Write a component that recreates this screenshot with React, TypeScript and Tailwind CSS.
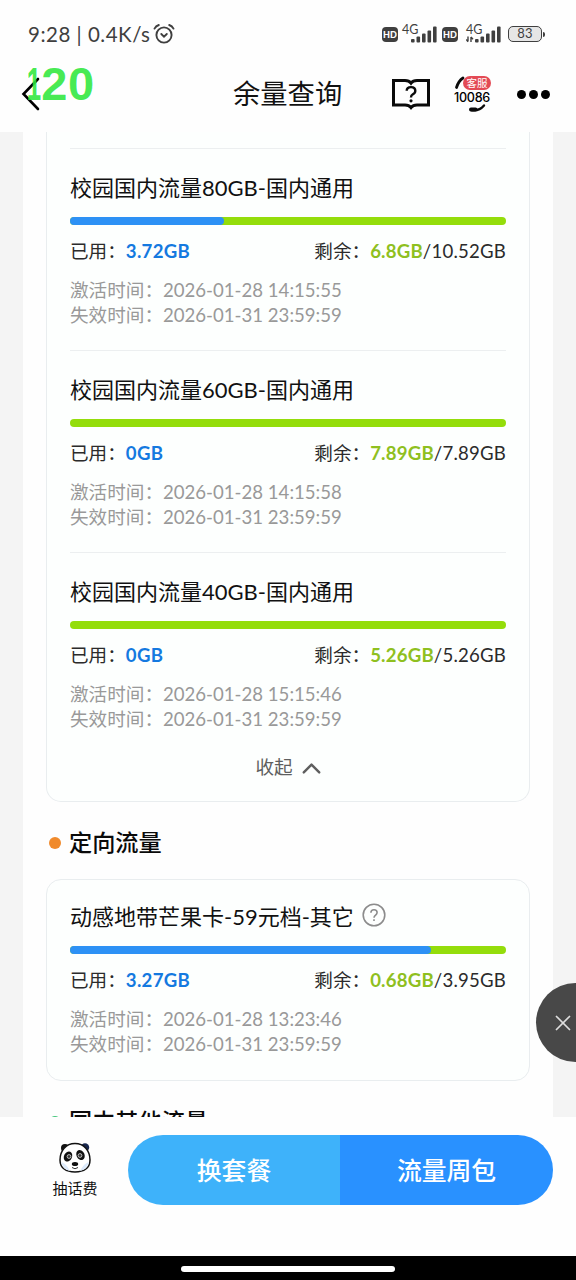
import { ChevronUp, X } from "lucide-react";

interface IPackage {
    id: number;
    name: string;
    used: string;
    left: string;
    total: string;
    percent: number;
    start: string;
    end: string;
    help?: boolean;
}

const packages: IPackage[] = [
    {
        id: 1,
        name: "校园国内流量80GB-国内通用",
        used: "3.72GB",
        left: "6.8GB",
        total: "10.52GB",
        percent: 35.4,
        start: "2026-01-28 14:15:55",
        end: "2026-01-31 23:59:59",
    },
    {
        id: 2,
        name: "校园国内流量60GB-国内通用",
        used: "0GB",
        left: "7.89GB",
        total: "7.89GB",
        percent: 0,
        start: "2026-01-28 14:15:58",
        end: "2026-01-31 23:59:59",
    },
    {
        id: 3,
        name: "校园国内流量40GB-国内通用",
        used: "0GB",
        left: "5.26GB",
        total: "5.26GB",
        percent: 0,
        start: "2026-01-28 15:15:46",
        end: "2026-01-31 23:59:59",
    },
];

const directional: IPackage = {
    id: 4,
    name: "动感地带芒果卡-59元档-其它",
    used: "3.27GB",
    left: "0.68GB",
    total: "3.95GB",
    percent: 82.8,
    start: "2026-01-28 13:23:46",
    end: "2026-01-31 23:59:59",
    help: true,
};

function Signal({ arrows }: { arrows?: boolean }) {
    return (
        <div className="relative w-[36px] h-[20px]">
            <span className="absolute left-0 top-0 text-[12.5px] leading-[12px] text-[#3f3f3f]">4G</span>
            <svg viewBox="0 0 36 20" className="w-[36px] h-[20px]" fill="#3f3f3f">
                <rect x="9" y="15" width="3.6" height="3.5" rx="1" />
                <rect x="14.5" y="12.5" width="3.6" height="6" rx="1" />
                <rect x="20" y="9.5" width="3.6" height="9" rx="1" />
                <rect x="25.5" y="6.5" width="3.6" height="12" rx="1" />
                <rect x="31" y="2.5" width="3.6" height="16" rx="1" />
                {arrows && (
                    <path d="M2 12.5v5M0.2 15.5l1.8 2.2M5 18v-5M5 13l2 2.2" stroke="#3f3f3f" strokeWidth="1.4" fill="none" />
                )}
            </svg>
        </div>
    );
}

function HdBadge() {
    return (
        <span className="w-[16px] h-[15px] rounded-[4px] bg-[#3f3f3f] text-white text-[9px] leading-[15px] font-black text-center">
            HD
        </span>
    );
}

function StatusBar() {
    return (
        <div className="h-[56px] pt-[12px] pl-[28px] pr-[31px] flex items-center justify-between text-[#3f3f3f]">
            <div className="flex items-center">
                <span className="text-[20.5px] tracking-[0.5px] whitespace-pre">9:28 | 0.4K/s</span>
                <svg viewBox="0 0 22 22" className="w-[22px] h-[22px] ml-[2px]" fill="none" stroke="#3f3f3f" strokeWidth="1.9" strokeLinecap="round">
                    <circle cx="11" cy="12" r="7.6" />
                    <path d="M8.3 11l2.7 2.6 2.8-2.6M1.5 5.6C2.4 3.9 4 2.6 5.8 2M20.5 5.6C19.6 3.9 18 2.6 16.2 2" />
                </svg>
            </div>
            <div className="flex items-center">
                <HdBadge />
                <div className="ml-[4px]"><Signal /></div>
                <div className="ml-[4px] flex"><HdBadge /></div>
                <div className="ml-[8px]"><Signal arrows /></div>
                <span className="ml-[6px] w-[34px] h-[16px] rounded-[5px] border-[1.5px] border-[#3f3f3f] bg-[#e6e6e6] text-[13px] leading-[13px] tracking-[0.3px] text-center">
                    83
                </span>
                <span className="ml-px w-[2px] h-[5px] rounded-r bg-[#3f3f3f]"></span>
            </div>
        </div>
    );
}

function Header() {
    return (
        <div className="relative h-[76px] shrink-0 flex items-center">
            <svg viewBox="0 0 20 34" className="w-[20px] h-[34px] ml-[21px]" fill="none" stroke="#000" strokeWidth="2.6" strokeLinecap="round">
                <path d="M17 2L2.5 17L17 32" />
            </svg>
            {/* fps overlay */}
            <div className="absolute left-[15px] top-[4px] flex font-['Liberation_Sans'] font-bold text-[47px] leading-[48px] text-[#2ee83c]/90">
                <span className="origin-right scale-x-[0.55]">1</span>
                <span className="tracking-[0.6px]">20</span>
            </div>
            <h1 className="ml-[192px] w-[110px] text-[27.3px] leading-[38px] text-[#111] whitespace-nowrap">余量查询</h1>
            <svg viewBox="0 0 40 32" className="w-[40px] h-[32px] ml-[48px]" fill="none" stroke="#0a0a0a" strokeWidth="3">
                <path d="M2.5 2.5H14Q18 2.5 20 5.2Q22 2.5 26 2.5H37.5V27H26Q22 27 20 29.5Q18 27 14 27H2.5Z" />
                <path d="M15.7 12.8Q15.7 9.1 20 9.1T24.3 12.8Q24.3 15.2 21.8 16.3Q20 17.2 20 19.4" strokeWidth="2.4" />
                <circle cx="20" cy="22.8" r="1.6" fill="#0a0a0a" stroke="none" />
            </svg>
            <div className="relative ml-[21px] w-[40px] h-[38px] flex items-center justify-center">
                <svg viewBox="0 0 40 38" className="absolute inset-0" fill="none" stroke="#0a0a0a" strokeLinecap="round">
                    <path d="M4.5 12.5Q6.5 6 11 3" strokeWidth="2.8" />
                    <path d="M19 35Q27 36.5 32 30.5" strokeWidth="2.4" />
                    <path d="M19 34.6H23.5" strokeWidth="4" />
                </svg>
                <span className="text-[12.6px] leading-[14px] mt-[8px] font-medium font-['Inter'] tracking-[-0.3px] text-black">10086</span>
                <span className="absolute left-[11px] top-[0.5px] w-[28px] h-[14px] rounded-full bg-[#e34a55] text-[10.5px] leading-[14px] text-white text-center">
                    客服
                </span>
            </div>
            <div className="ml-[25px] flex gap-[3px]">
                <span className="w-[9px] h-[9px] rounded-full bg-black"></span>
                <span className="w-[9px] h-[9px] rounded-full bg-black"></span>
                <span className="w-[9px] h-[9px] rounded-full bg-black"></span>
            </div>
        </div>
    );
}

function PackageItem({ item }: { item: IPackage }) {
    return (
        <div>
            <div className="flex items-center h-[28px]">
                <h3 className="text-[22px] leading-[28px] text-[#111] whitespace-nowrap">{item.name}</h3>
                {item.help && (
                    <svg viewBox="0 0 24 24" className="w-[24px] h-[24px] ml-[8px] -mt-[5px]" fill="none" stroke="#8c8c8c" strokeWidth="1.6">
                        <circle cx="12" cy="12" r="10.8" />
                        <path d="M8.9 9.7Q8.9 6.7 12 6.7T15.1 9.6Q15.1 11.2 13.5 12.2Q12 13.1 12 14.8" />
                        <path d="M12 16.2V17.9" />
                    </svg>
                )}
            </div>
            <div className="mt-[15px] h-[8px] rounded-full bg-[#94dd0b] overflow-hidden">
                <div className="h-full rounded-r-full bg-[#2d91f5]" style={{ width: `${item.percent}%` }}></div>
            </div>
            <div className="mt-[13px] flex justify-between text-[18.6px] leading-[26px] text-[#2b2b2b]">
                <p>
                    已用：<span className="font-bold tracking-[0.3px] text-[#1479e0]">{item.used}</span>
                </p>
                <p>
                    剩余：
                    <span className="tracking-[0.2px]">
                        <span className="font-bold text-[#8fc01f]">{item.left}</span>/{item.total}
                    </span>
                </p>
            </div>
            <div className="mt-[14px] text-[18.6px] leading-[25px] text-[#999]">
                <p>激活时间：{item.start}</p>
                <p>失效时间：{item.end}</p>
            </div>
        </div>
    );
}

function SectionTitle({ name, dot }: { name: string; dot: string }) {
    return (
        <div className="h-[77px] pl-[26px] flex items-center">
            <span className={`w-[12px] h-[12px] mt-[4px] rounded-full ${dot}`}></span>
            <h2 className="ml-[8px] mt-[3px] text-[23.2px] leading-[34px] font-medium text-[#0a0a0a]">{name}</h2>
        </div>
    );
}

function Panda() {
    return (
        <svg viewBox="0 0 34 32" className="w-[34px] h-[32px]">
            <circle cx="7" cy="6" r="4" fill="#111" />
            <circle cx="27" cy="5.5" r="4.2" fill="#17264d" />
            <path d="M17 1.5C26 1.5 32 8.5 32 18C32 26 26 30 17 30S2 26 2 18C2 8.5 8 1.5 17 1.5Z" fill="#fff" stroke="#111" strokeWidth="1.5" />
            <path d="M3 20Q5 27 12 29Q8 21 3 20ZM31 20Q29 27 22 29Q26 21 31 20Z" fill="#dceafb" />
            <ellipse cx="10" cy="14.5" rx="4" ry="5.3" transform="rotate(25 10 14.5)" fill="#111" />
            <ellipse cx="22.5" cy="13" rx="4" ry="5.3" transform="rotate(-25 22.5 13)" fill="#111" />
            <circle cx="11" cy="14.5" r="1.9" fill="#333" stroke="#ccc" strokeWidth="0.9" />
            <circle cx="22" cy="13.5" r="1.9" fill="#333" stroke="#ccc" strokeWidth="0.9" />
            <ellipse cx="17" cy="22" rx="3.2" ry="2" fill="#111" />
            <path d="M14 25.5Q17 28 20 25.5" fill="none" stroke="#333" strokeWidth="1" />
        </svg>
    );
}

export default function App() {
    return (
        <main className="relative w-[576px] h-[1280px] overflow-hidden flex flex-col bg-[#fefefe] font-['Lato','Noto_Sans_CJK_SC',sans-serif]">
            <StatusBar />
            <Header />

            <div className="h-[985px] shrink-0 overflow-hidden bg-[#f4f4f4] px-[23px]">
                <div className="h-full bg-[#fefefe]">
                    <div className="mx-[23px] h-[670px] px-[23px] pt-[16px] border border-t-0 border-[#e9edef] rounded-b-[15px] bg-[#fdfffe]">
                        {packages.map((item) => (
                            <div key={item.id} className="h-[202px] pt-[25px] border-t border-[#eceff0]">
                                <PackageItem item={item} />
                            </div>
                        ))}
                        <div className="h-[28px] pl-[6px] flex items-center justify-center text-[18.6px] text-[#5f5f5f]">
                            收起
                            <ChevronUp size={31} strokeWidth={1.9} className="ml-[3px]" />
                        </div>
                    </div>

                    <SectionTitle name="定向流量" dot="bg-[#f08a2c]" />

                    <div className="mx-[23px] h-[202px] px-[23px] pt-[23px] border border-[#e9edef] rounded-[15px] bg-[#fdfffe]">
                        <PackageItem item={directional} />
                    </div>

                    <SectionTitle name="国内其他流量" dot="bg-[#45c67c]" />
                </div>
            </div>

            <div className="h-[139px] shrink-0 pt-[18px] pr-[23px] flex justify-end">
                <div className="w-[106px] pt-[7px] flex flex-col items-center">
                    <Panda />
                    <span className="mt-[3px] text-[15px] leading-[22px] text-[#111]">抽话费</span>
                </div>
                <div className="w-[425px] h-[70px] flex rounded-full overflow-hidden text-[24.8px] font-medium text-white">
                    <button className="w-[212px] pt-[2px] bg-[#3eb2fa]">换套餐</button>
                    <button className="flex-1 pt-[2px] bg-[#2991ff]">流量周包</button>
                </div>
            </div>

            <div className="h-[24px] shrink-0 flex items-center justify-center pt-[2px] bg-black">
                <span className="w-[214px] h-[6px] rounded-full bg-white"></span>
            </div>

            <button className="absolute left-[536px] top-[983px] w-[79px] h-[79px] pl-[14px] rounded-full bg-[#484848] text-[#ddd]">
                <X size={26} strokeWidth={1.6} />
            </button>
        </main>
    );
}
